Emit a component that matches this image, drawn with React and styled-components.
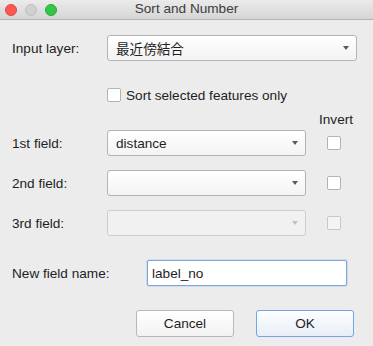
import styled, { createGlobalStyle } from "styled-components";

const Global = createGlobalStyle`
  html, body {
    margin: 0;
    padding: 0;
    background: #ececec;
  }
  body {
    font-family: "Liberation Sans", Arial, sans-serif;
    font-size: 13.6px;
    color: #1e1e1e;
  }
`;

const Window = styled.div`
  width: 373px;
  height: 346px;
  background: #ececec;
  display: flex;
  flex-direction: column;
`;

const TitleBar = styled.div`
  height: 19px;
  border-bottom: 1px solid #b3b3b3;
  background: linear-gradient(#ebebeb, #d5d5d5);
  display: flex;
  align-items: center;
  position: relative;
`;

const Lights = styled.div`
  display: flex;
  gap: 8px;
  padding-left: 5px;
`;

const Light = styled.span`
  width: 12px;
  height: 12px;
  border-radius: 50%;
  box-sizing: border-box;
  background: ${(p) => p.$c};
  border: 1px solid ${(p) => p.$b};
`;

const Title = styled.div`
  position: absolute;
  left: 0;
  right: 0;
  top: 1px;
  text-align: center;
  font-size: 13.6px;
  color: #3c3c3c;
  pointer-events: none;
`;

const Body = styled.div`
  padding: 15px 16px 0 12px;
  display: flex;
  flex-direction: column;
`;

const Row = styled.div`
  display: flex;
  align-items: center;
  height: ${(p) => p.$h || 26}px;
  margin-top: ${(p) => p.$mt || 0}px;
`;

const Label = styled.div`
  width: ${(p) => p.$w || 95}px;
  flex: none;
  color: #1e1e1e;
`;

const Combo = styled.div`
  box-sizing: border-box;
  width: ${(p) => (p.$w ? `${p.$w}px` : "auto")};
  flex: ${(p) => (p.$w ? "none" : "1")};
  height: 26px;
  border: 1px solid ${(p) => (p.$disabled ? "#cdcdcd" : "#b4b4b4")};
  border-radius: 3px;
  background: ${(p) =>
    p.$disabled ? "#f1f1f1" : "linear-gradient(#ffffff, #f3f3f3)"};
  display: flex;
  align-items: center;
  padding: 0 7px 0 8px;
  color: #1e1e1e;
  font-family: "Liberation Sans", "Noto Sans CJK JP", sans-serif;
`;

const ComboText = styled.span`
  flex: 1;
`;

const Arrow = styled.span`
  width: 0;
  height: 0;
  border-left: 3.5px solid transparent;
  border-right: 3.5px solid transparent;
  border-top: 4px solid ${(p) => (p.$disabled ? "#c2c2c2" : "#5a5a5a")};
`;

const Check = styled.span`
  box-sizing: border-box;
  width: 14px;
  height: 14px;
  flex: none;
  border: 1px solid ${(p) => (p.$disabled ? "#c8c8c8" : "#b3b3b3")};
  border-radius: 2px;
  background: ${(p) => (p.$disabled ? "#f4f4f4" : "#fff")};
  margin-left: ${(p) => p.$ml || 0}px;
`;

const CheckText = styled.span`
  margin-left: 5px;
`;

const InvertRow = styled.div`
  display: flex;
  justify-content: flex-end;
  padding-right: 4px;
  margin-top: 9px;
  height: 16px;
  align-items: center;
`;

const TextInput = styled.div`
  box-sizing: border-box;
  width: 200px;
  height: 26px;
  border: 1px solid #7ea6de;
  border-radius: 2px;
  background: #fff;
  display: flex;
  align-items: center;
  padding-left: 4px;
  box-shadow: 0 0 0 1px rgba(126, 166, 222, 0.25);
`;

const Buttons = styled.div`
  display: flex;
  justify-content: flex-end;
  gap: 22px;
  margin-top: 24px;
  padding-right: 3px;
`;

const Button = styled.div`
  box-sizing: border-box;
  width: 98px;
  height: 27px;
  border-radius: 3px;
  border: 1px solid ${(p) => (p.$primary ? "#74a3e6" : "#b8b8b8")};
  background: ${(p) =>
    p.$primary
      ? "linear-gradient(#fdfeff, #e8eef7)"
      : "linear-gradient(#ffffff, #f2f2f2)"};
  display: flex;
  align-items: center;
  justify-content: center;
  color: #1e1e1e;
`;

export default function App() {
  return (
    <Window>
      <Global />
      <TitleBar>
        <Lights>
          <Light $c="#fc5753" $b="#df4744" />
          <Light $c="#d0d0d0" $b="#c0c0c0" />
          <Light $c="#33c748" $b="#27aa35" />
        </Lights>
        <Title>Sort and Number</Title>
      </TitleBar>
      <Body>
        <Row>
          <Label>Input layer:</Label>
          <Combo>
            <ComboText>最近傍結合</ComboText>
            <Arrow />
          </Combo>
        </Row>
        <Row $mt={27} $h={14}>
          <Label />
          <Check />
          <CheckText>Sort selected features only</CheckText>
        </Row>
        <InvertRow>Invert</InvertRow>
        <Row $mt={3}>
          <Label>1st field:</Label>
          <Combo $w={199}>
            <ComboText>distance</ComboText>
            <Arrow />
          </Combo>
          <Check $ml={21} />
        </Row>
        <Row $mt={14}>
          <Label>2nd field:</Label>
          <Combo $w={199}>
            <ComboText />
            <Arrow />
          </Combo>
          <Check $ml={21} />
        </Row>
        <Row $mt={14}>
          <Label>3rd field:</Label>
          <Combo $w={199} $disabled>
            <ComboText />
            <Arrow $disabled />
          </Combo>
          <Check $ml={21} $disabled />
        </Row>
        <Row $mt={24}>
          <Label $w={135}>New field name:</Label>
          <TextInput>label_no</TextInput>
        </Row>
        <Buttons>
          <Button>Cancel</Button>
          <Button $primary>OK</Button>
        </Buttons>
      </Body>
    </Window>
  );
}
